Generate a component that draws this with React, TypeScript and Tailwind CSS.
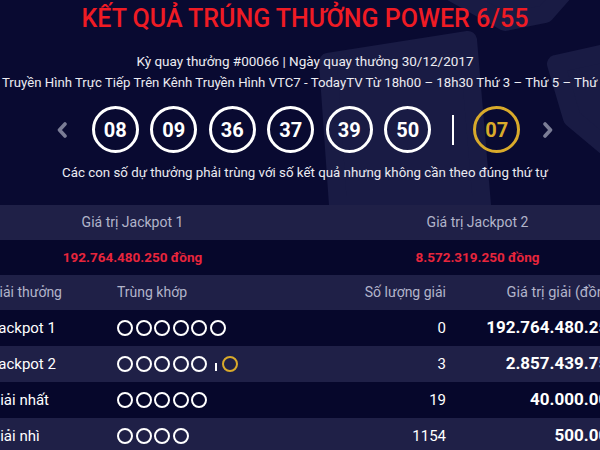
import React from "react";

const MAIN_BALLS = ["08", "09", "36", "37", "39", "50"];

const PRIZES = [
  { name: "Jackpot 1", white: 6, gold: false, count: "0", value: "192.764.480.250", dark: true },
  { name: "Jackpot 2", white: 5, gold: true, count: "3", value: "2.857.439.750", dark: false },
  { name: "Giải nhất", white: 5, gold: false, count: "19", value: "40.000.000", dark: true },
  { name: "Giải nhì", white: 4, gold: false, count: "1154", value: "500.000", dark: false },
];

function Chevron({ dir }: { dir: "left" | "right" }) {
  return (
    <svg width="10" height="16" viewBox="0 0 10 16" className="shrink-0">
      <polyline
        points={dir === "left" ? "8,2 2.5,8 8,14" : "2,2 7.5,8 2,14"}
        fill="none"
        stroke="#7b7d96"
        strokeWidth="3.6"
        strokeLinecap="round"
        strokeLinejoin="round"
      />
    </svg>
  );
}

function Ring({ gold }: { gold?: boolean }) {
  return (
    <span
      className={`w-[16px] h-[16px] rounded-full border-[2.5px] shrink-0 ${gold ? "border-[#d9aa2b]" : "border-white"}`}
    />
  );
}

function Backdrop() {
  return (
    <svg
      width="600"
      height="205"
      viewBox="0 0 600 205"
      className="absolute top-0 left-0"
      fill="#191b44"
      stroke="#191b44"
      strokeWidth="18"
      strokeLinejoin="round"
    >
      <path d="M 328 62 L 468 40 L 482 205 L 338 205 Z" />
      <path d="M 430 -20 L 575 -20 L 545 14 L 505 22 Z" />
      <path d="M 556 64 L 610 52 L 610 150 L 572 118 Z" />
    </svg>
  );
}

const COLS = "grid grid-cols-[127px_200px_129px_172px] pl-[30px]";

export default function App() {
  return (
    <div
      className="relative w-[600px] h-[450px] overflow-hidden bg-[#090a31] text-white"
      style={{ fontFamily: "Roboto, 'Noto Sans', sans-serif" }}
    >
      <Backdrop />

      <div className="relative w-[690px] ml-[-40px] flex flex-col items-center">
        <h1 className="h-[38px] leading-[38px] text-[25px] font-medium text-[#ef1b24] whitespace-nowrap">
          KẾT QUẢ TRÚNG THƯỞNG POWER 6/55
        </h1>

        <p className="mt-[13px] leading-[21px] text-[13.5px] text-[#ececf2] whitespace-nowrap">
          Kỳ quay thưởng #00066 | Ngày quay thưởng 30/12/2017
        </p>
        <p className="leading-[21px] text-[13.2px] text-[#ececf2] whitespace-nowrap">
          Truyền Hình Trực Tiếp Trên Kênh Truyền Hình VTC7 - TodayTV Từ 18h00 – 18h30 Thứ 3 – Thứ 5 – Thứ 7
        </p>

        <div className="mt-[13px] flex items-center h-[47px]">
          <Chevron dir="left" />
          <div className="ml-[25px] flex items-center gap-[11.5px]">
            {MAIN_BALLS.map((n) => (
              <div
                key={n}
                className="w-[47px] h-[47px] rounded-full border-[3px] border-white flex items-center justify-center text-[20px] font-bold"
              >
                {n}
              </div>
            ))}
          </div>
          <div className="ml-[21px] w-[2px] h-[30px] bg-white" />
          <div className="ml-[19px] w-[47px] h-[47px] rounded-full border-[3px] border-[#d9aa2b] flex items-center justify-center text-[20px] font-bold text-[#d9aa2b]">
            07
          </div>
          <div className="ml-[23px]">
            <Chevron dir="right" />
          </div>
        </div>

        <p className="mt-[10px] leading-[20px] text-[13.3px] text-[#ececf2] whitespace-nowrap">
          Các con số dự thưởng phải trùng với số kết quả nhưng không cần theo đúng thứ tự
        </p>

        <div className="mt-[22px] w-full">
          <div className="grid grid-cols-2 h-[35px] bg-[#1f2047] text-[14px] text-[#b2b4ca]">
            <div className="flex items-center justify-center">Giá trị Jackpot 1</div>
            <div className="flex items-center justify-center">Giá trị Jackpot 2</div>
          </div>
          <div className="grid grid-cols-2 h-[35px] bg-[#06072b] text-[13.5px] font-bold text-[#e8253c]">
            <div className="flex items-center justify-center">192.764.480.250 đồng</div>
            <div className="flex items-center justify-center">8.572.319.250 đồng</div>
          </div>

          <div className={`${COLS} h-[35px] bg-[#1f2047] text-[14px] text-[#b2b4ca] items-center`}>
            <div>Giải thưởng</div>
            <div>Trùng khớp</div>
            <div className="text-right">Số lượng giải</div>
            <div className="text-right whitespace-nowrap text-[14.5px]">Giá trị giải (đồng)</div>
          </div>

          {PRIZES.map((p) => (
            <div
              key={p.name}
              className={`${COLS} h-[36px] items-center text-[15px] ${p.dark ? "bg-[#06072b]" : "bg-[#1f2047]"}`}
            >
              <div>{p.name}</div>
              <div className="flex items-center gap-[2.5px]">
                {Array.from({ length: p.white }).map((_, i) => (
                  <Ring key={i} />
                ))}
                {p.gold && (
                  <>
                    <span className="ml-[5px] mr-[3px] mt-[6px] w-[2px] h-[8px] bg-white" />
                    <Ring gold />
                  </>
                )}
              </div>
              <div className="text-right">{p.count}</div>
              <div className="text-right font-bold text-[17px]">{p.value}</div>
            </div>
          ))}
        </div>
      </div>
    </div>
  );
}
